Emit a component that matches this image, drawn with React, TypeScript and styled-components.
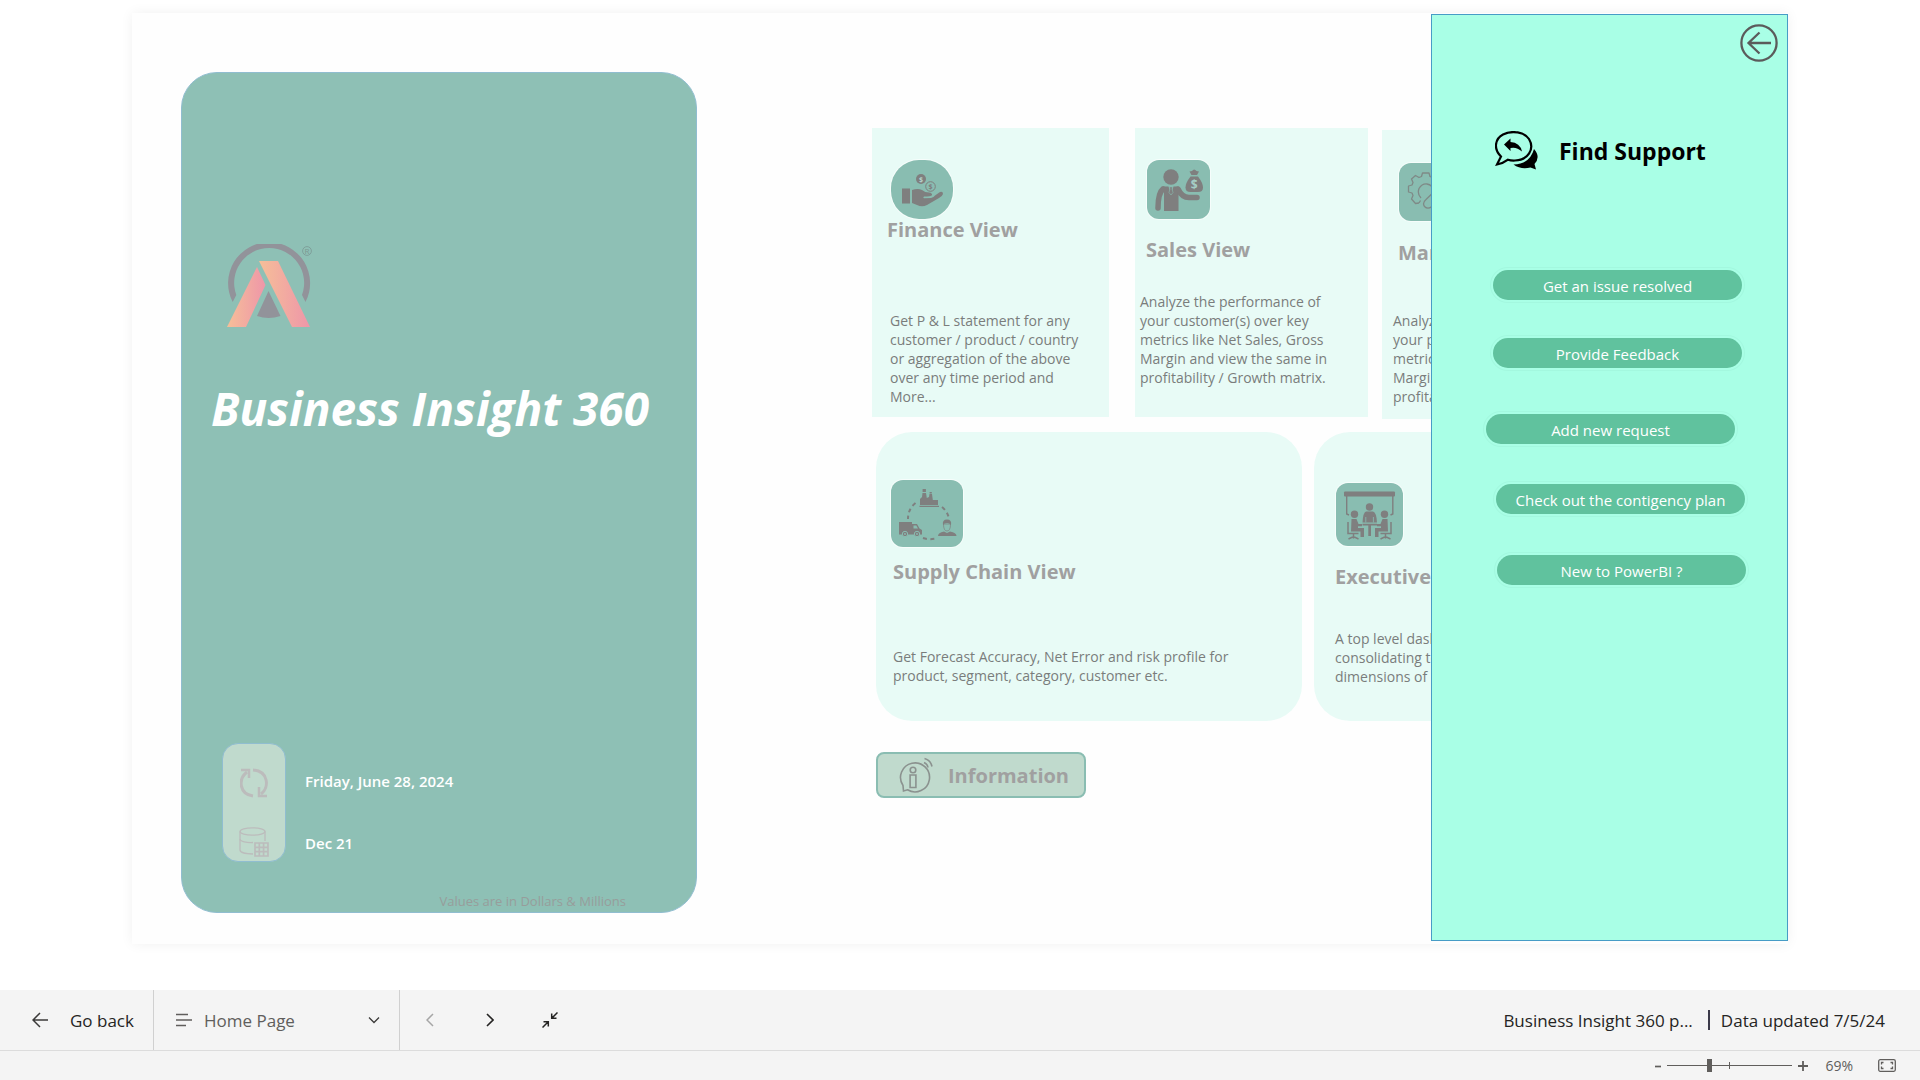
import React from "react";
import styled, { createGlobalStyle } from "styled-components";

const GlobalStyle = createGlobalStyle`
  *, *::before, *::after { box-sizing: border-box; }
  body {
    margin: 0;
    background: #fff;
    font-family: "Segoe UI", "Open Sans", "Noto Sans", sans-serif;
  }
  h1, h2, p { margin: 0; }
  button, select { font: inherit; color: inherit; }
  svg { display: block; }
`;

const Shell = styled.div`
  display: flex;
  flex-direction: column;
  min-height: 100vh;
`;

const Stage = styled.main`
  flex: 1;
  display: flex;
  padding: 13px 132px 46px;
`;

const ReportPage = styled.div`
  position: relative;
  flex: 1;
  min-width: 0;
  display: flex;
  gap: 175px;
  padding: 59px 0 31px 49px;
  background: #fefefe;
  box-shadow: 0 0 12px rgba(0, 0, 0, 0.06);
`;

const Hero = styled.section`
  flex: 0 0 516px;
  display: flex;
  flex-direction: column;
  padding: 171px 29px 0;
  background: #8ec0b5;
  border: 1px solid #90bdd0;
  border-radius: 36px;
`;

const LogoBox = styled.div`
  padding-left: 16px;
`;

const HeroTitle = styled.h1`
  margin-top: 48px;
  font-size: 46px;
  line-height: 64px;
  font-weight: 700;
  font-style: italic;
  color: #fff;
  white-space: nowrap;
`;

const Dates = styled.div`
  display: flex;
  gap: 19px;
  margin-top: auto;
  padding-left: 11px;
`;

const DateIcons = styled.div`
  display: flex;
  flex-direction: column;
  align-items: center;
  justify-content: space-between;
  width: 64px;
  height: 119px;
  padding: 24px 0 4px;
  background: #c0dacd;
  border: 1px solid #90bdd0;
  border-radius: 16px;
`;

const DateTexts = styled.div`
  display: flex;
  flex-direction: column;
  gap: 38px;
  padding-top: 26px;
  font-size: 15px;
  line-height: 24px;
  font-weight: 600;
  color: #fff;
`;

const HeroNote = styled.p`
  margin: 29px 41px 0 0;
  align-self: flex-end;
  font-size: 13px;
  line-height: 20px;
  padding-bottom: 1px;
  color: #979d9b;
`;

const Views = styled.section`
  flex: 1;
  min-width: 0;
  margin-right: 356px;
  padding-top: 56px;
  overflow: hidden;
`;

const TopRow = styled.div`
  display: flex;
  align-items: flex-start;
`;

const BottomRow = styled.div`
  display: flex;
  gap: 12px;
  margin: 13px 0 0 4px;
`;

const Card = styled.article<{ $w: number; $pad: string; $gap?: number; $top?: number; $round?: boolean }>`
  flex: 0 0 ${(p) => p.$w}px;
  height: 289px;
  margin-left: ${(p) => p.$gap ?? 0}px;
  margin-top: ${(p) => p.$top ?? 0}px;
  padding: ${(p) => p.$pad};
  background: #e8fbf6;
  border-radius: ${(p) => (p.$round ? 36 : 0)}px;
`;

const Tile = styled.div<{ $w: number; $h: number; $r: number; $in: number }>`
  width: ${(p) => p.$w}px;
  height: ${(p) => p.$h}px;
  margin-left: ${(p) => p.$in}px;
  background: #89bdb1;
  border-radius: ${(p) => p.$r}px;
  box-shadow: 0 0 0 1px #f6fdfb;
`;

const CardTitle = styled.h2<{ $gap: number; $in: number }>`
  margin: ${(p) => p.$gap}px 0 0 ${(p) => p.$in}px;
  font-size: 20px;
  line-height: 20px;
  font-weight: 700;
  color: #a0a0a0;
  white-space: nowrap;
`;

const CardText = styled.p<{ $gap: number; $in: number }>`
  margin: ${(p) => p.$gap}px 0 0 ${(p) => p.$in}px;
  font-size: 14px;
  line-height: 19px;
  color: #7a7d7c;
  white-space: nowrap;
`;

const InfoButton = styled.button`
  display: flex;
  align-items: center;
  gap: 15px;
  width: 210px;
  height: 46px;
  margin: 31px 0 0 4px;
  padding: 0 0 0 20px;
  background: #c0dacd;
  border: 2px solid #8abdb2;
  border-radius: 8px;
  font-size: 20px;
  line-height: 24px;
  font-weight: 700;
  color: #a0a0a0;
`;

const InfoLabel = styled.span`
  padding-top: 2px;
`;

const SupportPanel = styled.aside`
  position: absolute;
  top: 1px;
  right: 0;
  bottom: 3px;
  width: 357px;
  padding: 9px 9px 0 53px;
  background: #a9ffe6;
  border: 1px solid #479cc6;
`;

const BackButton = styled.button`
  display: block;
  margin: 0 0 0 auto;
  padding: 0;
  border: 0;
  background: none;
`;

const SupportHead = styled.div`
  display: flex;
  align-items: center;
  gap: 21px;
  margin: 67px 0 0 10px;
`;

const SupportTitle = styled.h2`
  padding-top: 2px;
  font-size: 23px;
  line-height: 40px;
  font-weight: 700;
  color: #000;
`;

const SupportList = styled.div`
  display: flex;
  flex-direction: column;
  margin-top: 99px;
`;

const Pill = styled.button<{ $gap: number; $in: number }>`
  width: 249px;
  height: 30px;
  margin: ${(p) => p.$gap}px 0 0 ${(p) => p.$in}px;
  padding: 1px 0 0;
  border: 0;
  border-radius: 15px;
  background: #60c29e;
  box-shadow: 0 0 0 2px #a9ffe6, 0 0 0 3px #a3f8df;
  font-size: 15px;
  line-height: 28px;
  color: #fff;
  white-space: nowrap;
`;

const Toolbar = styled.footer`
  display: flex;
  height: 61px;
  background: #f4f4f4;
  border-bottom: 1px solid #dcdcdc;
  font-size: 17px;
  line-height: 24px;
  color: #252423;
`;

const ToolbarText = styled.span`
  padding-top: 2px;
`;

const GoBack = styled.button`
  display: flex;
  align-items: center;
  gap: 22px;
  width: 154px;
  padding: 0 0 0 32px;
  border: 0;
  border-right: 1px solid #d0d0d0;
  background: none;
`;

const PagePicker = styled.label`
  display: grid;
  grid-template-columns: 16px 1fr 12px;
  align-items: center;
  column-gap: 12px;
  width: 246px;
  padding: 0 19px 0 22px;
  border-right: 1px solid #d0d0d0;
  color: #605e5c;
`;

const PageSelect = styled.select`
  appearance: none;
  width: 100%;
  padding: 2px 0 0;
  border: 0;
  background: none;
`;

const ArrowGroup = styled.div`
  display: flex;
  align-items: center;
  gap: 40px;
  padding-left: 20px;
`;

const IconButton = styled.button`
  display: flex;
  align-items: center;
  justify-content: center;
  width: 20px;
  padding: 0;
  border: 0;
  background: none;
`;

const ReportMeta = styled.div`
  display: flex;
  align-items: center;
  margin-left: auto;
  padding-right: 35px;
  white-space: nowrap;
`;

const MetaDivider = styled.span`
  width: 2px;
  height: 20px;
  margin: 0 11px 0 15px;
  background: #3b3a49;
`;

const StatusBar = styled.div`
  display: flex;
  align-items: center;
  justify-content: flex-end;
  height: 29px;
  padding-right: 24px;
  background: #f4f4f4;
  font-size: 14px;
  line-height: 20px;
  color: #605e5c;
`;

const ZoomButton = styled.button`
  display: flex;
  padding: 0;
  border: 0;
  background: none;
`;

const ZoomSlider = styled.input`
  appearance: none;
  width: 125px;
  height: 14px;
  margin: 0 6px;
  background:
    linear-gradient(#605e5c, #605e5c) center / 100% 1px no-repeat,
    linear-gradient(#605e5c, #605e5c) center / 1px 7px no-repeat;
  &::-webkit-slider-thumb {
    appearance: none;
    width: 5px;
    height: 13px;
    background: #605e5c;
  }
`;

const ZoomValue = styled.output`
  margin: 0 25px 0 17px;
`;

const Logo = () => (
  <svg width="87" height="84" viewBox="0 0 87 84" aria-hidden="true">
    <defs>
      <linearGradient id="leg" x1="0" x2="1" y1="0" y2="0">
        <stop offset="0" stopColor="#f6bf98" />
        <stop offset="1" stopColor="#ee96a9" />
      </linearGradient>
    </defs>
    <path d="M5.7 58A41 41 0 1 1 78.5 58L75 51A35 35 0 1 0 9.3 51Z" fill="#92939a" />
    <path d="M30 23L38.5 41L19 83H0Z" fill="url(#leg)" />
    <path d="M32 17H51L83 83H65Z" fill="url(#leg)" />
    <path d="M41.500 47L53.500 72Q41.500 76 30 72Z" fill="#92939a" />
    <circle cx="80" cy="7" r="4.400" fill="none" stroke="#7fa09b" />
    <text x="80" y="10" fontSize="8" textAnchor="middle" fill="#7c9893">R</text>
  </svg>
);

const SyncIcon = () => (
  <svg width="28" height="30" viewBox="0 0 28 30" fill="none" stroke="#bcbcbc" strokeWidth="3" aria-hidden="true">
    <path d="M13 28C-1 26 -2 11 7 4" />
    <path d="M1 2H9V10" strokeWidth="2.500" />
    <path d="M13 2C28 3 30 19 21 26" />
    <path d="M27 28H19V19" strokeWidth="2.500" />
  </svg>
);

const DatabaseIcon = () => (
  <svg width="30" height="30" viewBox="0 0 30 30" fill="none" stroke="#bcbcbc" strokeWidth="1.300" aria-hidden="true">
    <ellipse cx="13.500" cy="4.500" rx="12.500" ry="3.700" />
    <path d="M1 4.500V23C1 25.500 7 27 14 27" />
    <path d="M26 4.500V14M1 12C1 14.500 8 16 14 15.500" />
    <path d="M16 16H29V29H16ZM16 20.300H29M16 24.600H29M20.300 16V29M24.600 16V29" strokeWidth="1.700" />
  </svg>
);

const FinanceIcon = () => (
  <svg width="62" height="59" viewBox="0 0 62 59" fill="#7f7f7f" aria-hidden="true">
    <rect x="11" y="28.500" width="8" height="15" />
    <path d="M21 30Q27 28 31 30Q34 32.500 38 32.500Q41.500 33 41 35.300Q40 36.500 33 36.500Q31.500 37.500 33 38.300L40 38Q43 37 44 35.500L49 32Q52 31 52 34Q51.500 36 48 38L36 45Q31 47.500 26 45L21 43Z" />
    <circle cx="30" cy="19" r="5" />
    <circle cx="39.500" cy="26.500" r="4.800" fill="#89bdb1" stroke="#7f7f7f" />
    <text x="30" y="21.700" fontSize="7" fontWeight="700" textAnchor="middle" fill="#b5d2cb">$</text>
    <text x="39.500" y="29.200" fontSize="7" fontWeight="700" textAnchor="middle">$</text>
  </svg>
);

const SalesIcon = () => (
  <svg width="63" height="59" viewBox="0 0 63 59" fill="#7f7f7f" aria-hidden="true">
    <circle cx="24" cy="17" r="7.700" />
    <path d="M17 26.500L21.500 26.500L24 34L26.500 26.500L31.500 26.500V51H17Z" />
    <path d="M22.300 27H25.700L25 29L26 32.500L24 35L22 32.500L23 29Z" stroke="#89bdb1" strokeWidth=".6" />
    <path d="M16 29Q11 33 11 48" fill="none" stroke="#7f7f7f" strokeWidth="5.500" strokeLinecap="round" />
    <path d="M31 29Q35 37.500 42 37.500H50" fill="none" stroke="#7f7f7f" strokeWidth="5.500" strokeLinecap="round" />
    <path d="M43.500 16.500H51Q56 23 56 27.500Q56 32 51 32H43.500Q38.500 32 38.500 27.500Q38.500 23 43.500 16.500Z" />
    <path d="M44.500 15L42.500 11.500L45 11Q47 8 49.500 11L52 11.500L50 15Z" />
    <text x="47.300" y="29" fontSize="12" fontWeight="700" textAnchor="middle" fill="#a5cec5">$</text>
  </svg>
);

const GearIcon = () => (
  <svg width="63" height="59" viewBox="0 0 63 59" fill="none" stroke="#7f8a87" strokeWidth="1.300" strokeLinejoin="round" aria-hidden="true">
    <path d="M20 40L16.500 40.500L12.500 36L14 32.500L13 30L9.500 29V23L13 22L14 19.500L12.500 16L16.500 12.500L20 14.500L22.500 13.500L23.500 10H30L31 13.500L33.500 14.500L37 12.500L41 16L39.500 19.500" />
    <path d="M22 35Q18 31 20 25.500Q23 20.500 28 21Q32 21.500 34 25" />
    <path d="M40 24L27 36.500Q23 40 25.500 43.500Q29 47 33.500 43L40 36" />
    <path d="M20 40L21.500 37.500" />
  </svg>
);

const SupplyIcon = () => (
  <svg width="72" height="67" viewBox="0 0 72 67" fill="#7f7f7f" aria-hidden="true">
    <path d="M29 25V19L31 17L31.500 13H35L35.800 18L38 17L38.500 14H41L41.800 20L47 20V25ZM31.600 9H34.900V12H31.600ZM38.600 12H40.800V13.500H38.600ZM28.500 25.700H48V27H28.500Z" />
    <path d="M24.500 23Q17 29 17 39M51 27Q57 32 58 39M32 58Q38 60 45 58.500" fill="none" stroke="#7f7f7f" strokeWidth="2" strokeDasharray="4 3.500" />
    <path d="M8 42H21V44H26L28.500 48.500L31 50V54.500H8Z" />
    <path d="M22.500 45.500H25.300L27 48.500H22.500Z" fill="#89bdb1" />
    <circle cx="14" cy="54" r="2.700" stroke="#89bdb1" />
    <circle cx="26" cy="54" r="2.700" stroke="#89bdb1" />
    <circle cx="14" cy="54" r=".9" fill="#89bdb1" />
    <circle cx="26" cy="54" r=".9" fill="#89bdb1" />
    <path d="M47 56Q47 52.500 53 51.500L56 53L59 51.500Q65.500 52.500 65.500 56Z" />
    <path d="M52.500 44Q52.500 51 56 51Q59.500 51 59.500 44Z" fill="#89bdb1" stroke="#7f7f7f" strokeWidth=".7" />
    <path d="M52 45Q51 39.500 56 39.500Q61 39.500 60 45Q58 42.500 56 43Q53 43 52 45Z" />
  </svg>
);

const ExecutiveIcon = () => (
  <svg width="67" height="63" viewBox="0 0 67 63" fill="#7f7f7f" aria-hidden="true">
    <rect x="8" y="8.500" width="51" height="5" rx="1" />
    <path d="M10.700 13V31L13 32M56.800 13V31L54.500 32" fill="none" stroke="#7f7f7f" strokeWidth="1.400" />
    <circle cx="33.500" cy="24" r="3.700" />
    <path d="M30 28.500H37Q40.500 29.500 41 39.500H26.500Q27 29.500 30 28.500Z" />
    <path d="M29.800 34V39.500M37.400 34V39.500" stroke="#89bdb1" strokeWidth=".8" />
    <path d="M26.500 40.700H41V42.600H35V53H32.300V42.600H26.500Z" />
    <circle cx="18.500" cy="31.300" r="3.700" />
    <circle cx="48.500" cy="31.300" r="3.700" />
    <path d="M15.500 36H20.500L22.500 41H26V43.300H22V45H28V54H24.500V48.500H15Z" />
    <path d="M51.500 36H46.500L44.500 41H41V43.300H45V45H39V54H42.500V48.500H52Z" />
    <path d="M12 39V50.500H22.500M55 39V50.500H44.500M17.500 50.500V55.500M49.500 50.500V55.500M12.500 56L17.500 53.500L22.500 56M44.500 56L49.500 53.500L54.500 56" fill="none" stroke="#7f7f7f" strokeWidth="1.500" />
  </svg>
);

const InfoIcon = () => (
  <svg width="35" height="36" viewBox="0 0 35 36" fill="none" stroke="#8b928f" strokeWidth="1.600" aria-hidden="true">
    <path d="M5 28.500L5.500 34L9.500 32.800A14.500 14.500 0 1 0 5 28.500Z" />
    <circle cx="15" cy="13" r="2.800" />
    <path d="M12.100 18H17.900V30.500H12.100Z" />
    <path d="M26 5.500Q29.500 7 30 10.500M26.500 1.500Q32.500 3 34 9.500" />
  </svg>
);

const BackCircleIcon = () => (
  <svg width="38" height="38" viewBox="0 0 38 38" fill="none" stroke="#5b5b5b" strokeWidth="2.300" aria-hidden="true">
    <circle cx="19" cy="19" r="17.600" />
    <path d="M31 19H8M19.500 8.500L8.500 19L19.500 29.500" />
  </svg>
);

const SupportIcon = () => (
  <svg width="43" height="39" viewBox="0 0 43 39" aria-hidden="true">
    <path d="M2 33.500L6 25.500C-1.500 18.500 -.5 8 8 3.500C17 -1 29.500 1 34 8C40 18 33 29 20 29.500Q16 29.700 13 28.700Q8 32.500 2 33.500Z" fill="none" stroke="#000" strokeWidth="2.200" />
    <path d="M9 13.500L15.500 7.500V11Q25 11.500 27 20.500Q21.500 15.500 15.500 17V20Z" />
    <path d="M39 18Q46 26 39.500 33L41 38.500L35.500 36.500Q26 39 18.500 33.500Q35 33 39 18Z" />
  </svg>
);

type Action = { label: string; gap: number; indent: number };

const actions: Action[] = [
  { label: "Get an issue resolved", gap: 0, indent: 8 },
  { label: "Provide Feedback", gap: 38, indent: 8 },
  { label: "Add new request", gap: 46, indent: 1 },
  { label: "Check out the contigency plan", gap: 40, indent: 11 },
  { label: "New to PowerBI ?", gap: 41, indent: 12 },
];

export default function App() {
  return (
    <Shell>
      <GlobalStyle />
      <Stage>
        <ReportPage>
          <Hero>
            <LogoBox><Logo /></LogoBox>
            <HeroTitle>Business Insight 360</HeroTitle>
            <Dates>
              <DateIcons><SyncIcon /><DatabaseIcon /></DateIcons>
              <DateTexts>
                <span>Friday, June 28, 2024</span>
                <span>Dec 21</span>
              </DateTexts>
            </Dates>
            <HeroNote>Values are in Dollars &amp; Millions</HeroNote>
          </Hero>

          <Views>
            <TopRow>
              <Card $w={237} $pad="32px 0 0 15px">
                <Tile $w={62} $h={59} $r={28} $in={4}><FinanceIcon /></Tile>
                <CardTitle $gap={1} $in={0}>Finance View</CardTitle>
                <CardText $gap={71} $in={3}>
                  Get P &amp; L statement for any<br />customer / product / country<br />or aggregation of the above<br />over any time period and<br />More...
                </CardText>
              </Card>
              <Card $w={233} $gap={26} $pad="32px 0 0 5px">
                <Tile $w={63} $h={59} $r={12} $in={7}><SalesIcon /></Tile>
                <CardTitle $gap={21} $in={6}>Sales View</CardTitle>
                <CardText $gap={32} $in={0}>
                  Analyze the performance of<br />your customer(s) over key<br />metrics like Net Sales, Gross<br />Margin and view the same in<br />profitability / Growth matrix.
                </CardText>
              </Card>
              <Card $w={233} $gap={14} $top={2} $pad="33px 0 0 11px">
                <Tile $w={63} $h={58} $r={12} $in={6}><GearIcon /></Tile>
                <CardTitle $gap={22} $in={5}>Marketing View</CardTitle>
                <CardText $gap={48} $in={0}>
                  Analyze the performance of<br />your product(s) over key<br />metrics like Net Sales, Gross<br />Margin and view the same in<br />profitability / Growth matrix.
                </CardText>
              </Card>
            </TopRow>
            <BottomRow>
              <Card $w={426} $round $pad="48px 0 0 15px">
                <Tile $w={72} $h={67} $r={12} $in={0}><SupplyIcon /></Tile>
                <CardTitle $gap={15} $in={2}>Supply Chain View</CardTitle>
                <CardText $gap={65} $in={2}>
                  Get Forecast Accuracy, Net Error and risk profile for<br />product, segment, category, customer etc.
                </CardText>
              </Card>
              <Card $w={426} $round $pad="51px 0 0 21px">
                <Tile $w={67} $h={63} $r={12} $in={1}><ExecutiveIcon /></Tile>
                <CardTitle $gap={21} $in={0}>Executive View</CardTitle>
                <CardText $gap={42} $in={0}>
                  A top level dashboard for executives<br />consolidating top insights from all<br />dimensions of business.
                </CardText>
              </Card>
            </BottomRow>
            <InfoButton type="button"><InfoIcon /><InfoLabel>Information</InfoLabel></InfoButton>
          </Views>

          <SupportPanel aria-label="Find Support">
            <BackButton type="button" aria-label="Close support"><BackCircleIcon /></BackButton>
            <SupportHead>
              <SupportIcon />
              <SupportTitle>Find Support</SupportTitle>
            </SupportHead>
            <SupportList>
              {actions.map((a) => (
                <Pill key={a.label} type="button" $gap={a.gap} $in={a.indent}>{a.label}</Pill>
              ))}
            </SupportList>
          </SupportPanel>
        </ReportPage>
      </Stage>

      <Toolbar>
        <GoBack type="button">
          <svg width="16" height="16" viewBox="0 0 16 16" fill="none" stroke="#3b3a39" strokeWidth="1.500" aria-hidden="true">
            <path d="M16 8H1M8 1L1 8L8 15" />
          </svg>
          <ToolbarText>Go back</ToolbarText>
        </GoBack>
        <PagePicker>
          <svg width="16" height="14" viewBox="0 0 16 14" stroke="#605e5c" strokeWidth="1.300" aria-hidden="true">
            <path d="M0 1.500H12M0 7H16M0 12.500H10" />
          </svg>
          <PageSelect aria-label="Page" defaultValue="home">
            <option value="home">Home Page</option>
          </PageSelect>
          <svg width="12" height="8" viewBox="0 0 12 8" fill="none" stroke="#3b3a39" strokeWidth="1.300" aria-hidden="true">
            <path d="M1 1.500L6 6.500L11 1.500" />
          </svg>
        </PagePicker>
        <ArrowGroup>
          <IconButton type="button" aria-label="Previous page" disabled>
            <svg width="8" height="14" viewBox="0 0 8 14" fill="none" stroke="#a6a6a6" strokeWidth="1.500" aria-hidden="true">
              <path d="M7 1L1 7L7 13" />
            </svg>
          </IconButton>
          <IconButton type="button" aria-label="Next page">
            <svg width="8" height="14" viewBox="0 0 8 14" fill="none" stroke="#252423" strokeWidth="1.600" aria-hidden="true">
              <path d="M1 1L7 7L1 13" />
            </svg>
          </IconButton>
          <IconButton type="button" aria-label="Exit full screen">
            <svg width="16" height="16" viewBox="0 0 16 16" fill="none" stroke="#252423" strokeWidth="1.500" aria-hidden="true">
              <path d="M15.500 .5L10 6M9.700 1.500V6.300H14.500M.5 15.500L6 10M1.500 9.700H6.300V14.500" />
            </svg>
          </IconButton>
        </ArrowGroup>
        <ReportMeta>
          <ToolbarText>Business Insight 360 p...</ToolbarText>
          <MetaDivider />
          <ToolbarText>Data updated 7/5/24</ToolbarText>
        </ReportMeta>
      </Toolbar>

      <StatusBar>
        <ZoomButton type="button" aria-label="Zoom out">
          <svg width="6" height="10" viewBox="0 0 6 10" aria-hidden="true"><path d="M0 5.500H6" stroke="#605e5c" strokeWidth="1.700" /></svg>
        </ZoomButton>
        <ZoomSlider type="range" aria-label="Zoom" min={10} max={190} defaultValue={69} />
        <ZoomButton type="button" aria-label="Zoom in">
          <svg width="10" height="10" viewBox="0 0 10 10" aria-hidden="true"><path d="M0 5H10M5 0V10" stroke="#605e5c" strokeWidth="1.800" /></svg>
        </ZoomButton>
        <ZoomValue>69%</ZoomValue>
        <ZoomButton type="button" aria-label="Fit to page">
          <svg width="18" height="13" viewBox="0 0 18 13" fill="none" stroke="#605e5c" strokeWidth="1.300" aria-hidden="true">
            <rect x=".7" y=".7" width="16.600" height="11.600" rx="1.500" />
            <path d="M5.500 3.500H3.500V5.500M12.500 3.500H14.500V5.500M5.500 9.500H3.500V7.500M12.500 9.500H14.500V7.500" />
          </svg>
        </ZoomButton>
      </StatusBar>
    </Shell>
  );
}
